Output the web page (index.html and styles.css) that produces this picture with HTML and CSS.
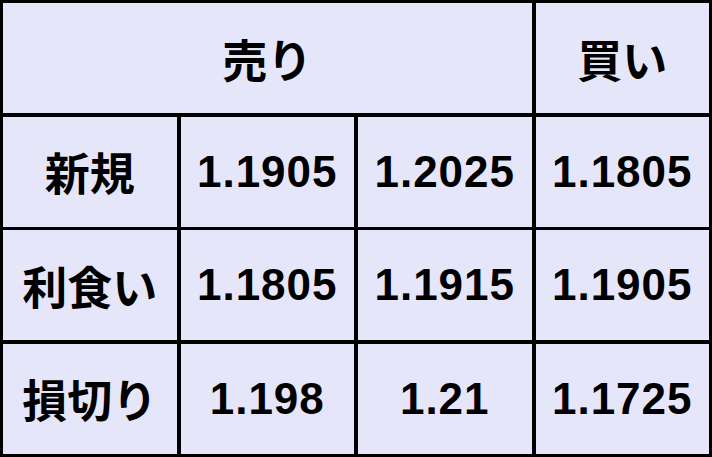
FILE: index.html
```html
<!DOCTYPE html>
<html lang="ja">
<head>
<meta charset="utf-8">
<title>売り 買い</title>
<link rel="stylesheet" href="styles.css">
</head>
<body>
<div class="board">
  <div class="cell head span3">売り</div>
  <div class="cell head">買い</div>

  <div class="cell label">新規</div>
  <div class="cell num">1.1905</div>
  <div class="cell num">1.2025</div>
  <div class="cell num">1.1805</div>

  <div class="cell label">利食い</div>
  <div class="cell num">1.1805</div>
  <div class="cell num">1.1915</div>
  <div class="cell num">1.1905</div>

  <div class="cell label">損切り</div>
  <div class="cell num">1.198</div>
  <div class="cell num">1.21</div>
  <div class="cell num">1.1725</div>
</div>
</body>
</html>
```

FILE: styles.css
```css
html, body {
  margin: 0;
  padding: 0;
  background: #ffffff;
}

.board {
  box-sizing: border-box;
  width: 712px;
  height: 457px;
  background: #000000;
  padding: 3px;
  display: grid;
  grid-template-columns: repeat(4, 1fr);
  grid-template-rows: repeat(4, 1fr);
  column-gap: 4px;
  row-gap: 3.5px;
  font-family: "Liberation Sans", "Noto Sans CJK JP", sans-serif;
  font-weight: bold;
  color: #000000;
}

.cell {
  background: #e6e6fa;
  display: flex;
  align-items: center;
  justify-content: center;
  white-space: nowrap;
}

.span3 {
  grid-column: span 3;
}

.head,
.label {
  font-size: 45px;
}

.num {
  font-size: 44px;
  letter-spacing: 1px;
}
```
